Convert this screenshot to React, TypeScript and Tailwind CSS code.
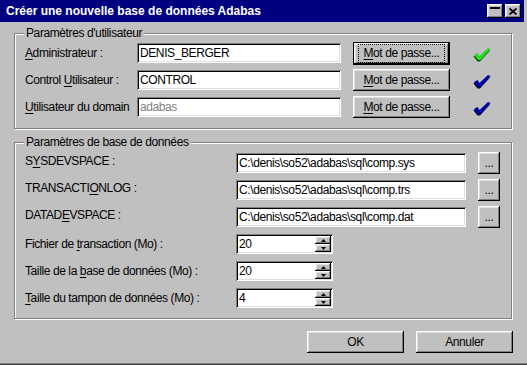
import React from "react";

const raised =
  "shadow-[inset_-1px_-1px_0_#000,inset_1px_1px_0_#fff,inset_-2px_-2px_0_#808080,inset_2px_2px_0_#dfdfdf]";
const sunken =
  "shadow-[inset_1px_1px_0_#808080,inset_-1px_-1px_0_#fff,inset_2px_2px_0_#000,inset_-2px_-2px_0_#dfdfdf]";
const etched = "border border-[#808080] shadow-[inset_1px_1px_0_#fff,1px_1px_0_#fff]";

function U({ children }: { children: React.ReactNode }) {
  return <span className="underline underline-offset-[2px] decoration-1">{children}</span>;
}

function Field({ value, w, disabled }: { value: string; w: string; disabled?: boolean }) {
  return (
    <div className={`${w} h-[20px] bg-white ${sunken} flex items-center pl-[3px] whitespace-nowrap overflow-hidden ${disabled ? "text-[#808080]" : "text-black"}`}>
      {value}
    </div>
  );
}

function Check({ color, shade }: { color: string; shade: string }) {
  return (
    <svg width="18" height="15" viewBox="0 0 18 15" className="mt-[3px]">
      <path d="M1 8.5 L4.5 6.5 L6.5 9.5 L15 1.5 L17.5 2.5 L7.5 13.5 L5 13.5 Z" fill={shade} transform="translate(-0.5,1)" />
      <path d="M1 8 L4.5 6 L6.5 9 L15 1 L17.5 2 L7.5 13 L5 13 Z" fill={color} />
    </svg>
  );
}

function Spin({ value }: { value: string }) {
  return (
    <div className={`w-[97px] h-[20px] bg-white ${sunken} flex items-center pl-[3px] pr-[2px]`}>
      <span className="flex-1">{value}</span>
      <div className="flex flex-col w-[16px]">
        <div className={`h-[8px] bg-[#c0c0c0] ${raised} flex items-center justify-center`}>
          <svg width="5" height="3" viewBox="0 0 5 3">
            <path d="M2.5 0 L5 3 L0 3 Z" fill="#000" />
          </svg>
        </div>
        <div className={`h-[8px] bg-[#c0c0c0] ${raised} flex items-center justify-center`}>
          <svg width="5" height="3" viewBox="0 0 5 3">
            <path d="M0 0 L5 0 L2.5 3 Z" fill="#000" />
          </svg>
        </div>
      </div>
    </div>
  );
}

function Btn({ children, w, def }: { children: React.ReactNode; w: string; def?: boolean }) {
  if (def) {
    return (
      <div className={`${w} h-[23px] border border-black flex`}>
        <div className={`flex-1 bg-[#c0c0c0] ${raised} flex items-center justify-center`}>
          <span className="outline outline-1 outline-dotted outline-black px-[4px] py-[1px] leading-[15px] whitespace-nowrap">{children}</span>
        </div>
      </div>
    );
  }
  return (
    <div className={`${w} h-[22px] bg-[#c0c0c0] ${raised} flex items-center justify-center whitespace-nowrap`}>{children}</div>
  );
}

export default function App() {
  return (
    <div className="w-[527px] h-[365px] bg-[#c0c0c0] flex flex-col pr-[3px] shadow-[inset_0_-1px_0_#404040,inset_0_-2px_0_#808080] font-['Liberation_Sans',Arial,sans-serif] text-[12px] tracking-[-0.4px] leading-[15px] text-black overflow-hidden">
      {/* title bar */}
      <div className="h-[22px] bg-[#000080] flex items-center pl-[6px] pr-[3px]">
        <span className="flex-1 text-white font-bold text-[12px] tracking-normal">
          Créer une nouvelle base de données Adabas
        </span>
        <div className={`w-[16px] h-[14px] bg-[#c0c0c0] ${raised} flex justify-center pt-[3px]`}>
          <div className="w-[10px] h-[2px] bg-black" />
        </div>
        <div className={`ml-[2px] w-[16px] h-[14px] bg-[#c0c0c0] ${raised} flex items-center justify-center`}>
          <svg width="8" height="7" viewBox="0 0 8 7">
            <path d="M0.5 0.5 L7.5 6.5 M7.5 0.5 L0.5 6.5" stroke="#000" strokeWidth="1.8" />
          </svg>
        </div>
      </div>

      <div className="pl-[14px] flex flex-col">
        {/* group 1 */}
        <div className={`relative mt-[11px] w-[498px] h-[96px] ${etched} pt-[9px] pl-[10px] flex flex-col gap-[7px]`}>
          <span className="absolute -top-[8px] left-[9px] px-[2px] bg-[#c0c0c0] whitespace-nowrap">Paramètres d'utilisateur</span>
          <div className="flex items-center h-[20px]">
            <div className="w-[112px] whitespace-nowrap"><U>A</U>dministrateur :</div>
            <Field w="w-[204px]" value="DENIS_BERGER" />
            <div className="ml-[12px]"><Btn w="w-[97px]" def><U>M</U>ot de passe...</Btn></div>
            <div className="ml-[23px]"><Check color="#22dd22" shade="#005500" /></div>
          </div>
          <div className="flex items-center h-[20px]">
            <div className="w-[112px] whitespace-nowrap">Control <U>U</U>tilisateur :</div>
            <Field w="w-[204px]" value="CONTROL" />
            <div className="ml-[12px]"><Btn w="w-[97px]"><U>M</U>ot de passe...</Btn></div>
            <div className="ml-[23px]"><Check color="#0000a8" shade="#000030" /></div>
          </div>
          <div className="flex items-center h-[20px]">
            <div className="w-[112px] whitespace-nowrap"><U>U</U>tilisateur du domain</div>
            <Field w="w-[204px]" value="adabas" disabled />
            <div className="ml-[12px]"><Btn w="w-[97px]"><U>M</U>ot de passe...</Btn></div>
            <div className="ml-[23px]"><Check color="#0000a8" shade="#000030" /></div>
          </div>
        </div>

        {/* group 2 */}
        <div className={`relative mt-[13px] w-[498px] h-[177px] ${etched} pt-[10px] pl-[10px] flex flex-col gap-[7px]`}>
          <span className="absolute -top-[8px] left-[9px] px-[2px] bg-[#c0c0c0] whitespace-nowrap">Paramètres de base de données</span>
          <div className="flex items-center h-[20px]">
            <div className="w-[211px] pb-[4px] whitespace-nowrap">S<U>Y</U>SDEVSPACE :</div>
            <Field w="w-[230px]" value="C:\denis\so52\adabas\sql\comp.sys" />
            <div className="ml-[12px]"><Btn w="w-[22px]">...</Btn></div>
          </div>
          <div className="flex items-center h-[20px]">
            <div className="w-[211px] pb-[4px] whitespace-nowrap">TRANSACTI<U>O</U>NLOG :</div>
            <Field w="w-[230px]" value="C:\denis\so52\adabas\sql\comp.trs" />
            <div className="ml-[12px]"><Btn w="w-[22px]">...</Btn></div>
          </div>
          <div className="flex items-center h-[20px]">
            <div className="w-[211px] pb-[4px] whitespace-nowrap">DATAD<U>E</U>VSPACE :</div>
            <Field w="w-[230px]" value="C:\denis\so52\adabas\sql\comp.dat" />
            <div className="ml-[12px]"><Btn w="w-[22px]">...</Btn></div>
          </div>
          <div className="flex items-center h-[20px]">
            <div className="w-[211px] whitespace-nowrap">Fichier de <U>t</U>ransaction (Mo) :</div>
            <Spin value="20" />
          </div>
          <div className="flex items-center h-[20px]">
            <div className="w-[211px] whitespace-nowrap">Taille de la <U>b</U>ase de données (Mo) :</div>
            <Spin value="20" />
          </div>
          <div className="flex items-center h-[20px]">
            <div className="w-[211px] whitespace-nowrap"><U>T</U>aille du tampon de données (Mo) :</div>
            <Spin value="4" />
          </div>
        </div>

        {/* bottom buttons */}
        <div className="mt-[12px] w-[499px] flex justify-end gap-[12px]">
          <Btn w="w-[97px]">OK</Btn>
          <Btn w="w-[97px]">Annuler</Btn>
        </div>
      </div>
    </div>
  );
}
